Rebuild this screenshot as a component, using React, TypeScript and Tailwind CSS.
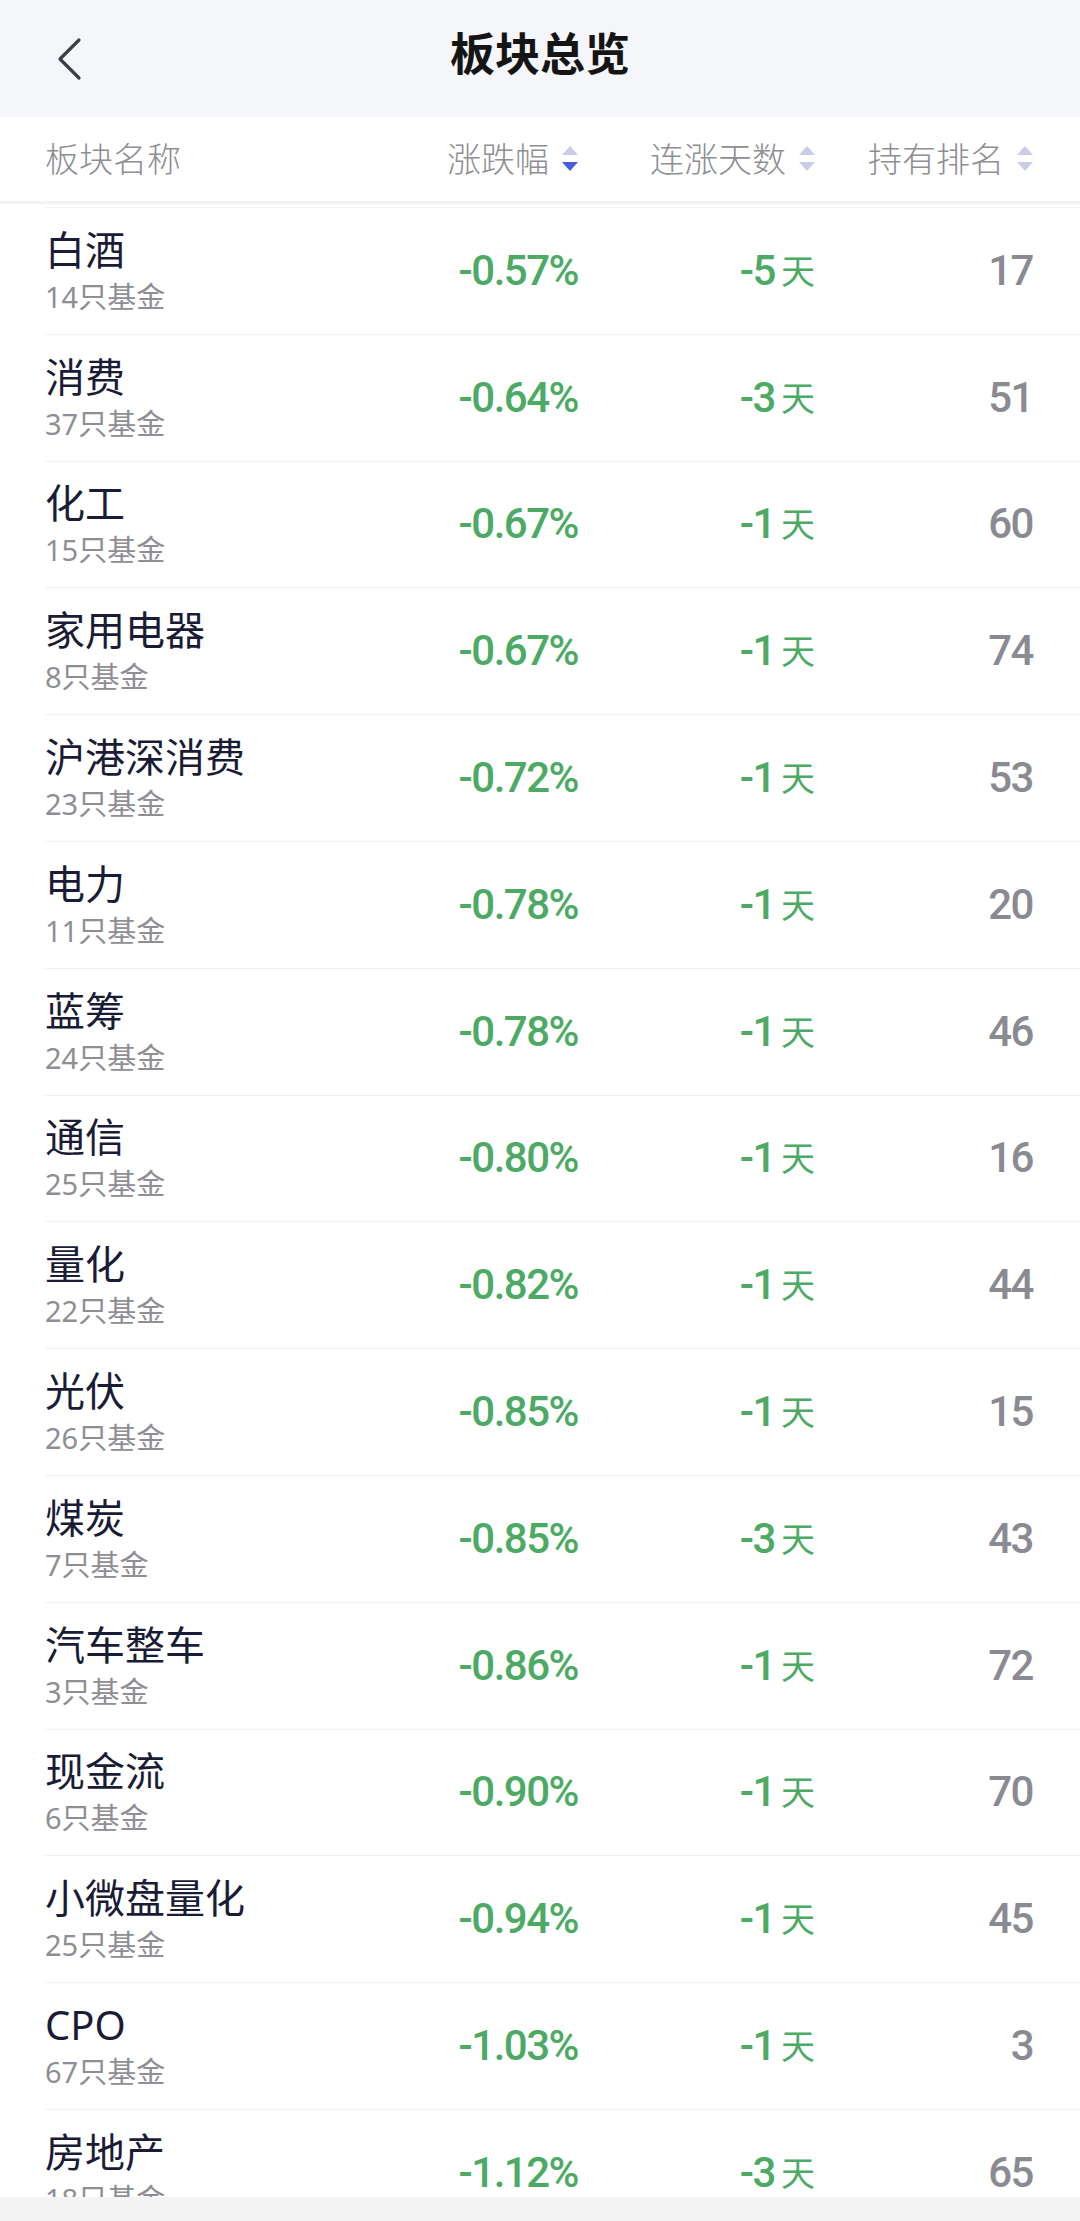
import React from "react";

type Sector = {
    name: string;
    funds: string;
    change: string;
    days: string;
    rank: string;
};

const sectors: Sector[] = [
    { name: "白酒", funds: "14只基金", change: "-0.57%", days: "-5", rank: "17" },
    { name: "消费", funds: "37只基金", change: "-0.64%", days: "-3", rank: "51" },
    { name: "化工", funds: "15只基金", change: "-0.67%", days: "-1", rank: "60" },
    { name: "家用电器", funds: "8只基金", change: "-0.67%", days: "-1", rank: "74" },
    { name: "沪港深消费", funds: "23只基金", change: "-0.72%", days: "-1", rank: "53" },
    { name: "电力", funds: "11只基金", change: "-0.78%", days: "-1", rank: "20" },
    { name: "蓝筹", funds: "24只基金", change: "-0.78%", days: "-1", rank: "46" },
    { name: "通信", funds: "25只基金", change: "-0.80%", days: "-1", rank: "16" },
    { name: "量化", funds: "22只基金", change: "-0.82%", days: "-1", rank: "44" },
    { name: "光伏", funds: "26只基金", change: "-0.85%", days: "-1", rank: "15" },
    { name: "煤炭", funds: "7只基金", change: "-0.85%", days: "-3", rank: "43" },
    { name: "汽车整车", funds: "3只基金", change: "-0.86%", days: "-1", rank: "72" },
    { name: "现金流", funds: "6只基金", change: "-0.90%", days: "-1", rank: "70" },
    { name: "小微盘量化", funds: "25只基金", change: "-0.94%", days: "-1", rank: "45" },
    { name: "CPO", funds: "67只基金", change: "-1.03%", days: "-1", rank: "3" },
    { name: "房地产", funds: "18只基金", change: "-1.12%", days: "-3", rank: "65" },
];

const cjk = "font-['Noto_Sans','Noto_Sans_CJK_SC',sans-serif]";
const num = "font-['Roboto','Noto_Sans_CJK_SC',sans-serif] font-medium text-[42px] tracking-[-1.5px] leading-none";
const cols = "grid grid-cols-[355px_178px_237px_218px]";

function SortArrows({ active }: { active?: "up" | "down" }) {
    return (
        <svg width="16" height="26" viewBox="0 0 16 26" className="ml-[13px] shrink-0">
            <polygon points="0,9 8,0 16,9" fill={active === "up" ? "#4560d6" : "#cbcde8"} />
            <polygon points="0,16 16,16 8,25" fill={active === "down" ? "#4560d6" : "#cbcde8"} />
        </svg>
    );
}

function HeaderCell({ label, active }: { label: string; active?: "up" | "down" }) {
    return (
        <div className="flex items-center justify-end">
            <span>{label}</span>
            <SortArrows active={active} />
        </div>
    );
}

function SectorRow({ s }: { s: Sector }) {
    return (
        <div className={`${cols} ml-[45px] pr-[47px] h-[126.8px] shrink-0 items-center border-t border-[#f1f1f3]`}>
            {/* name + fund count */}
            <div className="flex flex-col">
                <span className={`${cjk} text-[40px] leading-[48px] text-[#1a1c36]`}>{s.name}</span>
                <span className={`${cjk} text-[29px] leading-[38px] mt-[4px] text-[#8e8e94]`}>{s.funds}</span>
            </div>
            <div className={`${num} text-right text-[#4caa64]`}>{s.change}</div>
            <div className="flex items-center justify-end text-[#4caa64]">
                <span className={num}>{s.days}</span>
                <span className={`${cjk} text-[34px] leading-none ml-[6px]`}>天</span>
            </div>
            <div className={`${num} text-right text-[#8a8a92]`}>{s.rank}</div>
        </div>
    );
}

export default function App() {
    return (
        <div className="w-[1080px] h-[2221px] flex flex-col overflow-hidden bg-white">
            {/* Nav bar */}
            <div className="h-[117px] shrink-0 bg-[#f5f6fa] grid grid-cols-[1fr_auto_1fr] items-center pb-[10px]">
                <div className="pl-[56px] pt-[10px]">
                    <svg width="26" height="44" viewBox="0 0 26 44" fill="none">
                        <path d="M23 3 L4 22 L23 41" stroke="#3d3d47" strokeWidth="3.2" strokeLinecap="round" strokeLinejoin="round" />
                    </svg>
                </div>
                <h1 className={`${cjk} text-[45px] font-bold text-[#151515] leading-none`}>板块总览</h1>
                <div />
            </div>

            {/* Column headers */}
            <div className={`${cols} ${cjk} shrink-0 h-[87px] pl-[45px] pr-[47px] items-center text-[34px] font-light text-[#8e8e93] border-b-[3px] border-[#f3f3f4]`}>
                <div>板块名称</div>
                <HeaderCell label="涨跌幅" active="down" />
                <HeaderCell label="连涨天数" />
                <HeaderCell label="持有排名" />
            </div>

            {/* List */}
            <div className="flex-1 flex flex-col overflow-hidden pt-[3px]">
                {sectors.map((s) => (
                    <SectorRow key={s.name} s={s} />
                ))}
            </div>

            {/* bottom bar */}
            <div className="h-[24px] shrink-0 bg-[#f4f4f4]" />
        </div>
    );
}
